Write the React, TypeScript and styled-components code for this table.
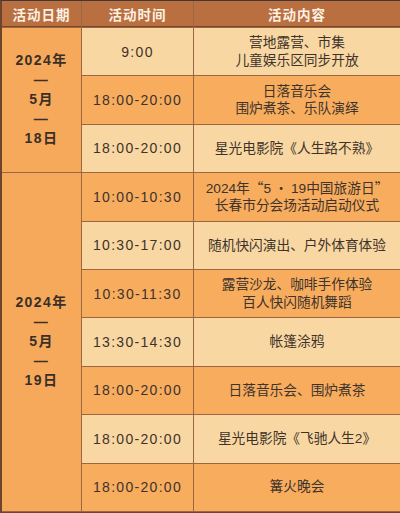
import React from "react"
import styled, { createGlobalStyle } from "styled-components"

const Global = createGlobalStyle`
  html, body {
    margin: 0;
    padding: 0;
    background: #f6a95a;
  }
  body {
    font-family: "Liberation Sans", "Noto Sans CJK SC", sans-serif;
  }
`

const Table = styled.div`
  width: 400px;
  height: 513px;
  box-sizing: border-box;
  display: grid;
  grid-template-columns: 79px 111px 1fr;
  grid-template-rows: 26px repeat(10, 47.4px);
  gap: 1px;
  background: #9b6742;
  border-top: 1px solid #3f3a36;
  border-left: 2px solid #6e4528;
  border-bottom: 1px solid #6e4528;
`

const HeadCell = styled.div`
  background: #ba6f41;
  color: #fdf1e2;
  font-weight: bold;
  font-size: 13.5px;
  letter-spacing: 1px;
  display: flex;
  align-items: center;
  justify-content: center;
  border-bottom: 1px solid #7b4627;
`

const DateCell = styled.div<{ $rows: string }>`
  grid-column: 1;
  grid-row: ${(p) => p.$rows};
  background: #f6a95a;
  color: #3a2f27;
  font-weight: bold;
  font-size: 14px;
  line-height: 19.5px;
  letter-spacing: 1.4px;
  display: flex;
  flex-direction: column;
  align-items: center;
  justify-content: center;
`

const Cell = styled.div<{ $light: boolean; $row: number }>`
  grid-row: ${(p) => p.$row};
  background: ${(p) => (p.$light ? "#f9d7a2" : "#f7ac5e")};
  color: #3d332b;
  display: flex;
  flex-direction: column;
  align-items: center;
  justify-content: center;
  text-align: center;
`

const Time = styled(Cell)`
  grid-column: 2;
  font-size: 14px;
  letter-spacing: 1.3px;
`

const Content = styled(Cell)`
  grid-column: 3;
  font-size: 13.7px;
  line-height: 17.5px;
`

const Cjk = styled.span`
  font-family: "Noto Sans CJK SC", sans-serif;
`

type Row = { time: string; lines: React.ReactNode[] }

const rows: Row[] = [
  { time: "9:00", lines: ["营地露营、市集", "儿童娱乐区同步开放"] },
  { time: "18:00-20:00", lines: ["日落音乐会", "围炉煮茶、乐队演绎"] },
  { time: "18:00-20:00", lines: ["星光电影院《人生路不熟》"] },
  {
    time: "10:00-10:30",
    lines: [
      <>
        2024年<Cjk>“</Cjk>5<Cjk> · </Cjk>19中国旅游日<Cjk>”</Cjk>
      </>,
      "长春市分会场活动启动仪式",
    ],
  },
  { time: "10:30-17:00", lines: ["随机快闪演出、户外体育体验"] },
  { time: "10:30-11:30", lines: ["露营沙龙、咖啡手作体验", "百人快闪随机舞蹈"] },
  { time: "13:30-14:30", lines: ["帐篷涂鸦"] },
  { time: "18:00-20:00", lines: ["日落音乐会、围炉煮茶"] },
  { time: "18:00-20:00", lines: ["星光电影院《飞驰人生2》"] },
  { time: "18:00-20:00", lines: ["篝火晚会"] },
]

function DateBlock({ day, span }: { day: string; span: string }) {
  return (
    <DateCell $rows={span}>
      <div>2024年</div>
      <div>—</div>
      <div>5月</div>
      <div>—</div>
      <div>{day}</div>
    </DateCell>
  )
}

export default function App() {
  return (
    <>
      <Global />
      <Table>
        <HeadCell>活动日期</HeadCell>
        <HeadCell>活动时间</HeadCell>
        <HeadCell>活动内容</HeadCell>
        <DateBlock day="18日" span="2 / 5" />
        <DateBlock day="19日" span="5 / 12" />
        {rows.map((r, i) => (
          <React.Fragment key={i}>
            <Time $light={i % 2 === 0} $row={i + 2}>
              {r.time}
            </Time>
            <Content $light={i % 2 === 0} $row={i + 2}>
              {r.lines.map((l, j) => (
                <div key={j}>{l}</div>
              ))}
            </Content>
          </React.Fragment>
        ))}
      </Table>
    </>
  )
}
